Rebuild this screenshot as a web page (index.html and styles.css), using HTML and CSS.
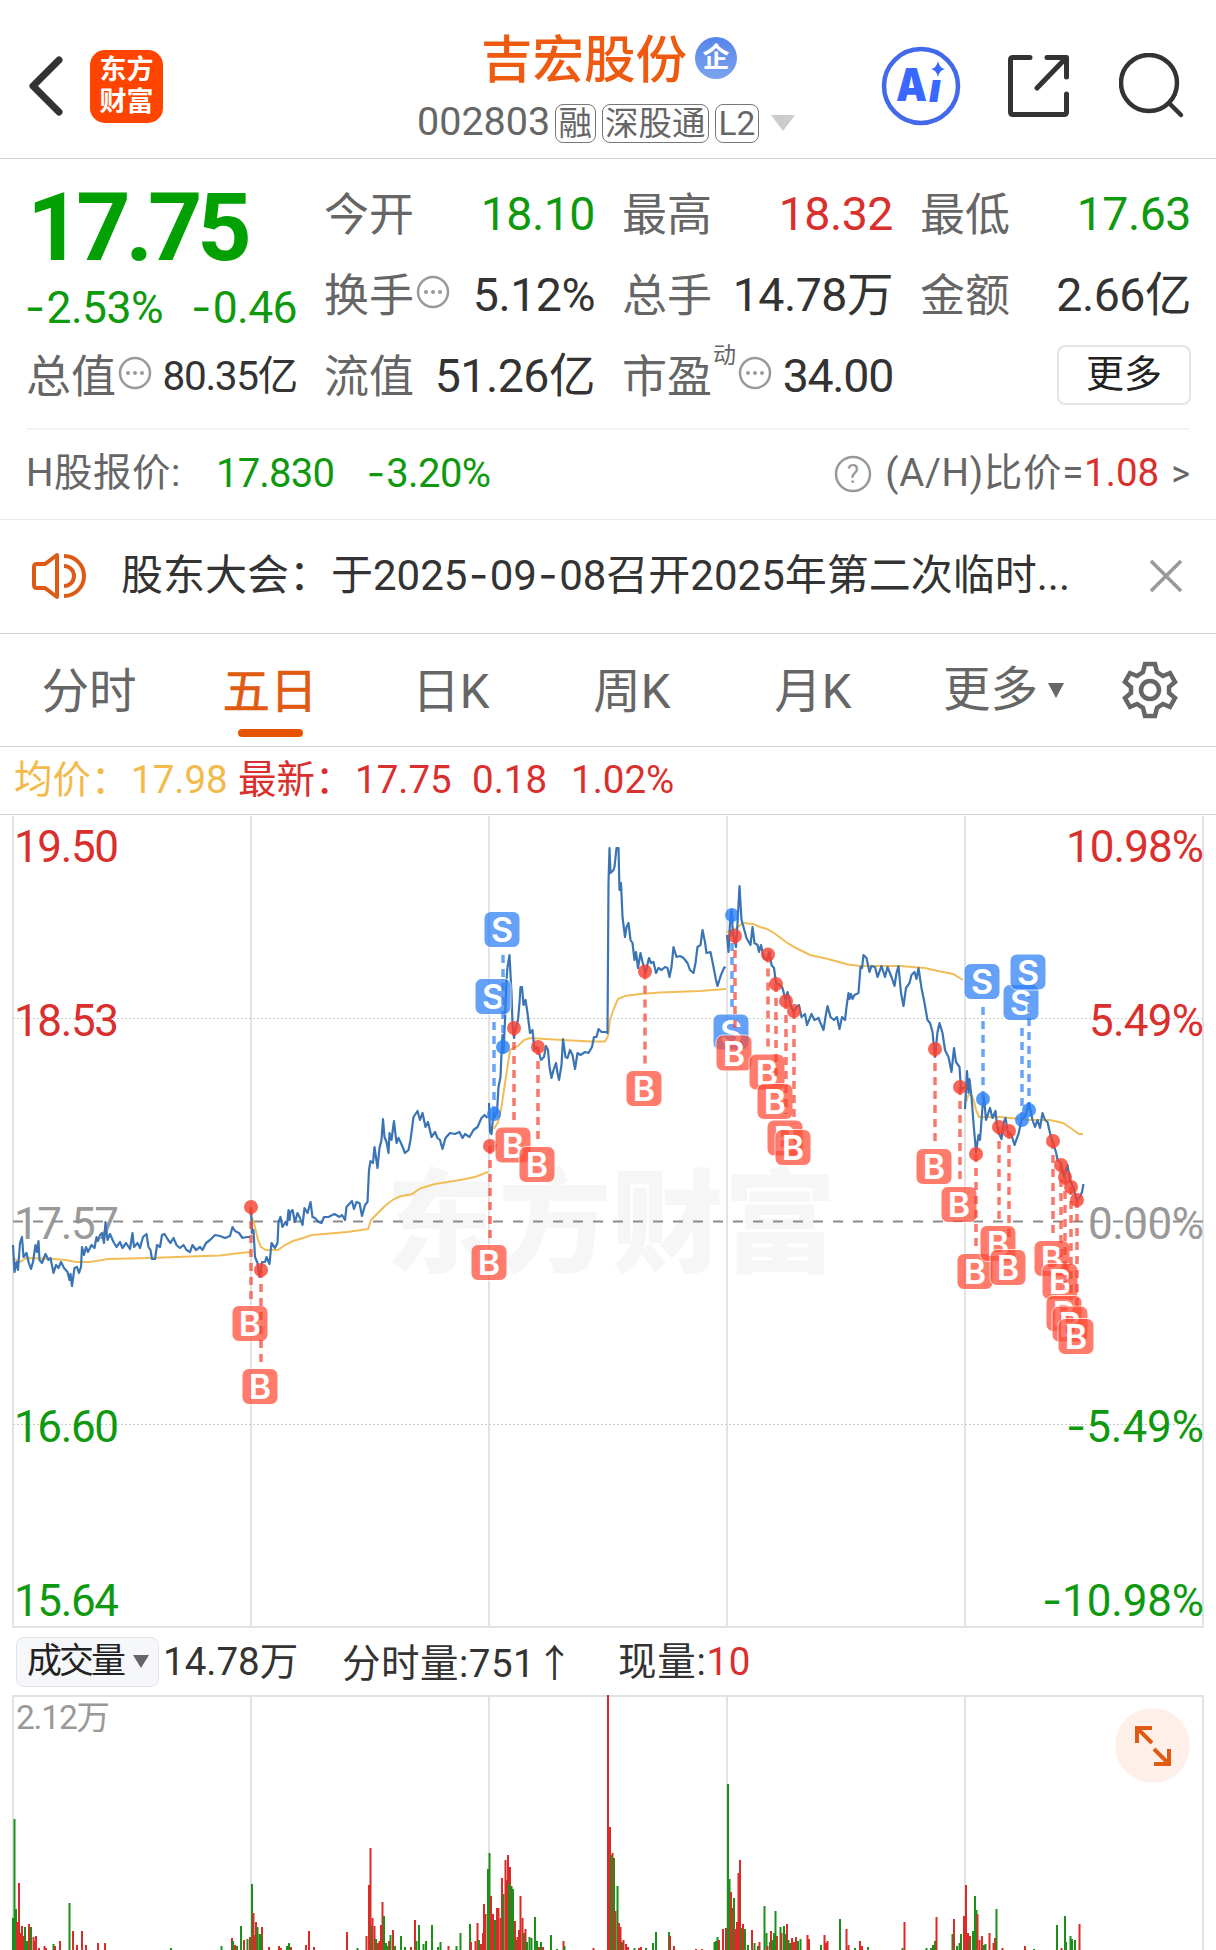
FILE: index.html
```html
<!DOCTYPE html>
<html lang="zh-CN">
<head>
    <meta charset="UTF-8">
    <title>吉宏股份 002803</title>
    <link rel="stylesheet" href="styles.css">
</head>
<body>
<header class="topbar">
    <div class="topbar-left">
        <svg class="back" width="40" height="64" viewBox="0 0 40 64"><path d="M34 6 8 32l26 26" fill="none" stroke="#333" stroke-width="7" stroke-linecap="round" stroke-linejoin="round"/></svg>
        <div class="logo"><span>东方</span><span>财富</span></div>
    </div>
    <div class="stock">
        <div class="stock-name">吉宏股份<span class="badge-qi">企</span></div>
        <div class="stock-code">
            <span class="code">002803</span>
            <span class="tag">融</span>
            <span class="tag">深股通</span>
            <span class="tag">L2</span>
            <svg class="code-arrow" width="24" height="16" viewBox="0 0 24 16"><path d="M0 0h24L12 16z" fill="#ccc"/></svg>
        </div>
    </div>
    <div class="topbar-right">
        <svg width="80" height="80" viewBox="0 0 80 80">
            <circle cx="40" cy="40" r="37" fill="none" stroke="#4169ea" stroke-width="4.5"/>
            <text class="ai-text" x="15" y="55" textLength="31" lengthAdjust="spacingAndGlyphs">A</text>
            <text class="ai-text ai-i" x="48" y="56">ı</text>
            <path d="M57 15q1.500 7 7 8-5.500 1-7 8-1.500-7-7-8 5.500-1 7-8z" fill="#3868ff"/>
        </svg>
        <svg width="64" height="64" viewBox="0 0 64 64" fill="none" stroke="#333" stroke-width="5" stroke-linecap="round" stroke-linejoin="round">
            <path d="M23 3.500H6Q3.500 3.500 3.500 6v52q0 2.500 2.500 2.500h51q2.500 0 2.500-2.500V40M40 3.500h19.500V23M59 4 30 34"/>
        </svg>
        <svg width="66" height="66" viewBox="0 0 66 66" fill="none" stroke="#333" stroke-width="4.500" stroke-linecap="round">
            <circle cx="30" cy="30" r="28"/><path d="M50 50 62 62"/>
        </svg>
    </div>
</header>

<section class="quote">
    <div class="quote-grid">
        <div class="col col-main">
            <div class="price green">17.75</div>
            <div class="change green"><span><i class="dash">-</i>2.53%</span><span><i class="dash">-</i>0.46</span></div>
            <div class="item item-small"><label>总值</label><svg class="dots" width="34" height="34" viewBox="0 0 34 34"><use href="#dots"/></svg><b>80.35亿</b></div>
        </div>
        <div class="col">
            <div class="item"><label>今开</label><b class="green">18.10</b></div>
            <div class="item"><label>换手</label><svg class="dots" width="34" height="34" viewBox="0 0 34 34"><g id="dots"><circle cx="17" cy="17" r="15" fill="none" stroke="#999" stroke-width="2.500"/><circle cx="10" cy="17" r="2" fill="#999"/><circle cx="17" cy="17" r="2" fill="#999"/><circle cx="24" cy="17" r="2" fill="#999"/></g></svg><b>5.12%</b></div>
            <div class="item"><label>流值</label><b>51.26亿</b></div>
        </div>
        <div class="col">
            <div class="item"><label>最高</label><b class="red">18.32</b></div>
            <div class="item"><label>总手</label><b>14.78万</b></div>
            <div class="item"><label>市盈</label><sup>动</sup><svg class="dots" width="34" height="34" viewBox="0 0 34 34"><use href="#dots"/></svg><b class="pe">34.00</b></div>
        </div>
        <div class="col">
            <div class="item"><label>最低</label><b class="green">17.63</b></div>
            <div class="item"><label>金额</label><b>2.66亿</b></div>
            <div class="item"><button type="button" class="more-btn">更多</button></div>
        </div>
    </div>
    <div class="h-share">
        <span class="h-label">H股报价:</span>
        <span class="h-price green">17.830</span>
        <span class="h-pct green"><i class="dash">-</i>3.20%</span>
        <div class="h-ratio">
            <svg width="38" height="38" viewBox="0 0 38 38"><circle cx="19" cy="19" r="17" fill="none" stroke="#999" stroke-width="2.500"/><text class="q-mark" x="19" y="28" text-anchor="middle">?</text></svg>
            <span class="h-ratio-text">(A/H)比价=</span><span class="red">1.08</span><span class="gt">&gt;</span>
        </div>
    </div>
</section>

<section class="notice">
    <svg width="56" height="48" viewBox="0 0 56 48" fill="none" stroke="#dd5a14" stroke-width="4" stroke-linejoin="round">
        <path d="M26 3v42L14 36H6q-3 0-3-3V15q0-3 3-3h8z"/>
        <path d="M33 4a20 20 0 0 1 0 40M33 14a10 10 0 0 1 0 20"/>
    </svg>
    <p class="notice-text">股东大会：于2025<i class="dash">-</i>09<i class="dash">-</i>08召开2025年第二次临时...</p>
    <svg class="close" width="34" height="34" viewBox="0 0 34 34"><path d="M2 2l30 30M32 2 2 32" stroke="#999" stroke-width="3.500"/></svg>
</section>

<nav class="tabs">
    <div class="tab">分时</div>
    <div class="tab active">五日</div>
    <div class="tab">日K</div>
    <div class="tab">周K</div>
    <div class="tab">月K</div>
    <div class="tab tab-more">更多<svg width="16" height="15" viewBox="0 0 16 15"><path d="M0 0h16L8 15z" fill="#666"/></svg></div>
    <svg class="gear" width="58" height="60" viewBox="-29 -30 58 60" fill="none" stroke="#666" stroke-width="4.500">
        <path d="M-5-26H5L7-18 13-14 20-17 25-8 19-3V3L25 8 20 17 13 14 7 18 5 26H-5L-7 18-13 14-20 17-25 8-19 3V-3L-25-8-20-17-13-14-7-18Z"/>
        <circle r="9"/>
    </svg>
</nav>

<div class="chart-info">
    <span class="avg n0">均价：</span><span class="avg n1">17.98</span><span class="red n2">最新：</span><span class="red n3">17.75</span><span class="red n4">0.18</span><span class="red">1.02%</span>
</div>

<svg id="price-chart" class="price-chart" width="1216" height="813" viewBox="0 815 1216 813"></svg>

<div class="volume-bar">
    <div class="volume-select"><span>成交量</span><svg width="16" height="13" viewBox="0 0 16 13"><path d="M0 0h16L8 13z" fill="#666"/></svg></div>
    <span class="v-total">14.78万</span>
    <span class="v-minute">分时量:751<i>↑</i></span>
    <span class="v-now">现量:<span class="red">10</span></span>
</div>

<div class="volume">
    <svg id="volume-chart" width="1216" height="255" viewBox="0 0 1216 255"></svg>
    <button type="button" class="expand">
        <svg width="40" height="44" viewBox="0 0 40 44" fill="none" stroke="#e05a12" stroke-width="4"><path d="M4 19V4h15M5 5l14 14M36 25v15H21M35 39 21 25"/></svg>
    </button>
</div>

<script src="chart.js"></script>
</body>
</html>
```

FILE: styles.css
```css
* {
    box-sizing: border-box;
}

body {
    width: 1216px;
    height: 1950px;
    margin: 0;
    overflow: hidden;
    background-color: #fff;
    color: #333;
    font-family: Roboto, "Noto Sans CJK SC", sans-serif;
    line-height: 1;
}

svg {
    display: block;
    flex: none;
}

.green {
    color: #0f990f;
}

.red {
    color: #d9302e;
}

/* Wide minus / date dash */
.dash {
    display: inline-block;
    width: 0.53em;
    font-family: Inter, sans-serif;
    font-style: normal;
    text-align: center;
}

/* Top bar */
.topbar {
    display: flex;
    height: 159px;
    border-bottom: 1px solid #d2d2d2;
}

.topbar-left {
    display: flex;
    align-items: center;
    gap: 25px;
    width: 408px;
    padding: 14px 0 0 25px;
}

.logo {
    display: flex;
    flex-direction: column;
    align-items: center;
    gap: 5px;
    width: 73px;
    height: 73px;
    padding-top: 7px;
    border-radius: 15px;
    background-color: #ff4400;
    color: #fff;
    font-size: 27px;
    font-weight: 700;
}

.stock {
    width: 420px;
}

.stock-name {
    display: flex;
    align-items: center;
    height: 98px;
    padding: 24px 0 0 73px;
    color: #ee5a10;
    font-size: 51.500px;
    font-weight: 500;
}

.badge-qi {
    width: 42px;
    height: 42px;
    margin: -6px 0 0 8px;
    border-radius: 50%;
    background: linear-gradient(#5585ea, #7ba3ee);
    color: #fff;
    font-size: 27px;
    font-weight: 700;
    line-height: 43px;
    text-align: center;
}

.stock-code {
    display: flex;
    align-items: center;
    gap: 6px;
    height: 50px;
    padding-left: 9px;
    color: #666;
}

.code {
    width: 132px;
    margin-top: -2px;
    font-size: 39.500px;
}

.tag {
    height: 39px;
    padding: 0 2.500px;
    border: 1.500px solid #777;
    border-radius: 8px;
    font-size: 33.500px;
    line-height: 37px;
}

.code-arrow {
    margin-left: 6px;
}

.topbar-right {
    display: flex;
    align-items: center;
    gap: 46px;
    padding: 14px 0 0 53px;
}

.topbar-right svg:last-child {
    margin-left: 2px;
}

.ai-text {
    fill: #3868ff;
    font-family: Inter, sans-serif;
    font-size: 46px;
    font-weight: 900;
}

.ai-i {
    font-size: 40px;
    font-style: italic;
}

/* Quote panel */
.quote {
    height: 361px;
    padding: 0 26px;
    border-bottom: 1px solid #eaeaea;
}

.quote-grid {
    display: grid;
    grid-template-columns: repeat(4, 271px);
    column-gap: 27px;
    height: 271px;
    padding-top: 15px;
    border-bottom: 2px solid #f4f4f4;
}

.item {
    display: flex;
    align-items: center;
    height: 81px;
}

.item label {
    padding-top: 2px;
    color: #666;
    font-size: 45px;
}

.item b {
    margin-left: auto;
    font-size: 46.500px;
    font-weight: 400;
    letter-spacing: -0.500px;
    white-space: nowrap;
}

.item-small b {
    font-size: 40.500px;
    letter-spacing: -1.300px;
}

.item .pe {
    letter-spacing: -1.300px;
}

.dots {
    margin: -8px 0 0 2px;
}

.item sup {
    margin: -42px 0 0 1px;
    color: #666;
    font-size: 23px;
    line-height: 1;
}

.price {
    height: 106px;
    padding-left: 1px;
    font-size: 95px;
    font-weight: 700;
    line-height: 107px;
    letter-spacing: -5.200px;
    color: #02a002;
}

.change {
    display: flex;
    justify-content: space-between;
    align-items: center;
    height: 56px;
    margin-left: -3px;
    font-size: 44.500px;
    letter-spacing: -0.600px;
}

.more-btn {
    width: 134px;
    height: 60px;
    margin: -4px 0 0 auto;
    padding: 0 0 2px;
    border: 2px solid #e4e4e4;
    border-radius: 8px;
    background-color: #fff;
    color: #222;
    font: 38px/1 Roboto, "Noto Sans CJK SC", sans-serif;
}

.h-share {
    display: flex;
    align-items: center;
    height: 85px;
    padding-top: 2px;
    color: #666;
    font-size: 38.500px;
}

.h-label {
    width: 190px;
    letter-spacing: 0.500px;
}

.h-price {
    width: 149px;
    font-size: 40px;
    letter-spacing: -0.800px;
}

.h-pct {
    font-size: 40px;
    letter-spacing: -0.600px;
}

.h-ratio {
    display: flex;
    align-items: center;
    margin-left: auto;
}

.h-ratio-text {
    margin-left: 13px;
    letter-spacing: 0.700px;
}

.gt {
    margin-left: 12px;
    font-size: 36px;
}

.q-mark {
    fill: #999;
    font-size: 26px;
}

/* Notice */
.notice {
    display: flex;
    align-items: center;
    height: 114px;
    padding: 0 33px 2px 31px;
    border-bottom: 1px solid #d2d2d2;
}

.notice-text {
    margin: 0 auto 0 34px;
    font-size: 42px;
    white-space: nowrap;
}

/* Tabs */
.tabs {
    display: flex;
    align-items: center;
    height: 113px;
    border-bottom: 1px solid #d2d2d2;
    color: #666;
    font-size: 47.500px;
}

.tab {
    position: relative;
    width: 181px;
    height: 112px;
    padding-right: 3px;
    text-align: center;
    line-height: 117px;
}

.tab.active {
    color: #e05a12;
    -webkit-text-stroke: 0.600px #e05a12;
}

.tab.active::after {
    content: '';
    position: absolute;
    left: 57px;
    bottom: 9px;
    width: 65px;
    height: 8px;
    border-radius: 4px;
    background-color: #e65400;
}

.tab-more {
    display: flex;
    align-items: center;
    justify-content: center;
    gap: 10px;
    width: 200px;
}

.gear {
    margin-left: 16px;
}

.chart-info {
    display: flex;
    align-items: center;
    height: 68px;
    padding-left: 14px;
    border-bottom: 1px solid #d2d2d2;
    font-size: 38.500px;
    white-space: nowrap;
}

.avg {
    color: #f2b94b;
}

.n0 {
    width: 117px;
}

.n1 {
    width: 107px;
}

.n2 {
    width: 117px;
}

.n3 {
    width: 117px;
}

.n4 {
    width: 99px;
}

/* Price chart */
.grid-line {
    stroke: #e2e2e2;
    stroke-width: 2;
}

.grid-dot {
    stroke: #ccc;
    stroke-width: 1;
    stroke-dasharray: 2 2;
}

.base-line {
    stroke: #8c8c8c;
    stroke-width: 2;
    stroke-dasharray: 10 10;
}

.watermark {
    fill: #f6f6f6;
    font-size: 112px;
    font-weight: 900;
}

.axis {
    font-size: 44px;
}

.axis-dash {
    font-family: Inter, sans-serif;
}

.axis-up {
    fill: #d9302e;
}

.axis-mid {
    fill: #999;
}

.axis-down {
    fill: #0f990f;
}

.line-price {
    fill: none;
    stroke: #3b74b5;
    stroke-width: 2.200;
    stroke-linejoin: round;
}

.line-avg {
    fill: none;
    stroke: #f0bd58;
    stroke-width: 2;
}

.mark-b {
    fill: #f6402f;
    stroke: #f6402f;
}

.mark-s {
    fill: #2a7ff5;
    stroke: #2a7ff5;
}

.mark-line {
    stroke-width: 3.500;
    stroke-dasharray: 8 6;
    opacity: 0.7;
}

.mark-dot {
    stroke: none;
    opacity: 0.8;
}

.mark-box {
    stroke: #fff;
    stroke-width: 1;
    opacity: 0.72;
}

.mark-b .mark-box {
    fill: #ff4b36;
}

.mark-text {
    fill: #fff;
    stroke: none;
    font-family: Inter, sans-serif;
    font-size: 34px;
    font-weight: 600;
    text-anchor: middle;
}

/* Volume */
.volume-bar {
    display: flex;
    align-items: center;
    height: 67px;
    padding-left: 16px;
    font-size: 38.500px;
    white-space: nowrap;
}

.volume-select {
    display: flex;
    align-items: center;
    gap: 7px;
    width: 143px;
    height: 50px;
    padding: 0 0 0 10px;
    border: 1px solid #e2e4e8;
    border-radius: 8px;
    background-color: #f6f7fa;
    color: #222;
    font-size: 35px;
    letter-spacing: -3px;
}

.volume-select span {
    width: 99px;
}

.v-total,
.v-minute,
.v-now {
    padding-top: 2px;
}

.v-total {
    width: 184px;
    margin-left: 4px;
}

.v-minute {
    width: 276px;
    margin-left: -5px;
    letter-spacing: 0.500px;
}

.v-minute i {
    font-family: "Noto Sans CJK SC", sans-serif;
    font-style: normal;
}

.v-now {
    letter-spacing: 0.700px;
}

.volume {
    position: relative;
    height: 255px;
}

.volume-max {
    fill: #999;
    font-size: 33.500px;
}

.expand {
    position: absolute;
    top: 13px;
    right: 26px;
    display: flex;
    align-items: center;
    justify-content: center;
    width: 75px;
    height: 75px;
    padding: 0;
    border: none;
    border-radius: 50%;
    background-color: #fef0e9;
}
```

FILE: chart.js
```js
const COLUMNS = [13, 251, 489, 727, 965, 1203];

// One polyline per trading day
const priceDays = [
    "13,1245 14.5,1272 16.5,1262 18,1270 20,1243 22,1237 23.5,1257 26.5,1253 28.5,1262 31,1269 33,1262 35.5,1245 37,1252 38.5,1241 39.5,1260 42,1263 45.5,1254 48.5,1260 50.5,1258 53.5,1273 56,1265 58.5,1268 61,1262 64,1268 67.5,1272 69.5,1280 70.5,1274 72,1286 74.5,1268 77,1267 79,1273 81,1267 82,1247 84,1255 86,1247 88,1252 91.5,1245 94.5,1248 96.5,1237 98,1241 100,1235 102,1233 104,1243 105.5,1222 107.5,1240 110,1234 113.5,1242 116.5,1247 120,1242 122.5,1248 126,1243 130,1249 132.5,1233 134,1247 137.5,1243 140,1248 143,1237 146.5,1234 148.5,1247 150.5,1250 152,1259 155,1259 157,1245 160,1247 162,1235 164.5,1234 167.5,1239 170.5,1243 173.5,1238 176.5,1245 180,1248 183.5,1245 186.5,1250 190,1252 192.5,1245 196,1250 200,1247 202.5,1250 206,1243 210,1240 215,1235 220,1236 225,1238 230,1236 232.5,1227 235,1231 239,1233 242.5,1238 247,1237 250,1237",
    "251,1208 252,1233 253.5,1230 255,1257 257.5,1263 259.5,1277 262,1262 265,1262 266.5,1257 269.5,1264 271.5,1243 275,1248 277.5,1243 278.5,1222 280.5,1217 282.5,1227 285.5,1222 287,1225 288.5,1210 289.5,1220 290.5,1212 292.5,1210 295,1222 297.5,1213 300,1218 302.5,1225 304.5,1208 307.5,1213 310.5,1202 312.5,1217 315,1218 318.5,1222 321.5,1223 324,1217 328.5,1217 334.5,1214 339.5,1217 342,1215 345,1220 346.5,1207 350,1203 352,1201 354,1209 356.5,1202 359.5,1203 362,1216 365,1205 367.5,1202 369,1170 370.5,1161 373,1163 374.5,1147 377.5,1168 379.5,1148 381.5,1140 383,1119 384.5,1137 386.5,1142 388.5,1153 389.5,1133 391.5,1140 394,1121 396.5,1143 398.5,1138 400.5,1142 403,1148 405,1153 408.5,1150 410.5,1140 413.5,1117 417.5,1111 420,1120 422.5,1113 425.5,1127 428,1122 431.5,1137 435,1132 437.5,1138 440,1140 442.5,1149 445.5,1138 450,1133 455,1134 459.5,1132 462.5,1138 465,1134 469.5,1137 473.5,1130 477.5,1127 481.5,1118 484.5,1115 487.5,1118",
    "489,1103 490,1132 491.5,1134 493.5,1113 495,1117 497,1112 498.5,1087 500.5,1077 501.5,1053 502.5,1035 503.5,1053 505,1020 506.5,980 507.5,967 509.5,955 511.5,993 512.5,1023 514,1038 516,1027 518,1020 519.5,1003 520.5,987 522,987 523.5,1005 525.5,1000 527.5,1013 530,1033 532.5,1030 534.5,1050 536.5,1047 539,1053 541,1060 544,1057 546,1046 548,1050 549.5,1067 551.5,1078 553.5,1070 556,1063 557.5,1073 559,1080 561.5,1065 563,1039 565.5,1057 567.5,1058 570,1050 572.5,1055 575,1069 577.5,1053 580.5,1055 585,1052 588.5,1053 592,1047 594,1037 596.5,1037 598.5,1029 601.5,1032 605.5,1032 607.5,1033 608.5,883 609.5,848 610.5,873 613.5,870 614.5,867 616.5,848 618.5,848 619.5,890 621,883 622.5,917 625,937 626.5,927 628.5,923 630.5,940 632.5,943 634.5,960 636,952 638,968 640.5,953 642.5,962 645.5,973 649,958 651,963 653.5,962 656,973 658.5,968 661.5,970 665,967 667.5,968 669.5,977 671.5,967 673.5,947 676.5,957 680,956 683.5,958 687.5,963 690,970 693.5,973 695.5,963 697.5,947 700.5,945 702.5,930 705,942 706.5,953 710.5,952 713.5,967 716,980 717.5,986 721,975 724,968 725.5,967",
    "727,935 728.5,952 730,923 731.5,910 732.5,927 734.5,940 736,947 737.5,923 739.5,886 741.5,920 743.5,927 746.5,938 750.5,945 752.5,927 754.5,943 757.5,945 759,952 761,945 764,958 766.5,960 769.5,952 771.5,965 774,968 776,983 780,985 782.5,988 785.5,1000 787.5,992 790,1003 793.5,1012 796.5,1007 799,1005 801.5,1017 805,1014 807,1025 811.5,1014 814.5,1020 818.5,1018 820.5,1023 823.5,1030 825.5,1017 827.5,1006 830.5,1017 834,1020 837,1017 839.5,1029 842,1017 845,1020 846.5,1007 848.5,993 849.5,999 851,994 852.5,999 854.5,995 858.5,993 860.5,967 862,968 863.5,955 866.5,958 869.5,972 871.5,966 875,967 877.5,977 881.5,966 885,977 887.5,967 891.5,977 894.5,986 896.5,973 898.5,966 901,993 903.5,1006 906,988 909.5,983 911.5,975 914.5,972 916.5,979 918.5,968 921.5,988 924.5,1003 927.5,1020 930,1023 932.5,1032 935,1057 937.5,1032 939.5,1023 942.5,1033 945,1050 948.5,1057 951.5,1072 954,1048 956,1062 959.5,1067 961,1090 964.5,1087",
    "965,1109 967,1071 968.5,1093 969.5,1079 971.5,1097 973.5,1123 976,1152 978.5,1135 980,1140 982.5,1107 984,1097 986,1120 990,1108 992.5,1118 995.5,1111 997.5,1130 1001.5,1139 1003.5,1123 1005.5,1118 1008,1133 1011.5,1135 1014.5,1145 1018.5,1134 1021.5,1120 1025,1117 1029,1103 1032.5,1120 1035,1127 1037.5,1120 1040,1128 1042.5,1113 1045,1120 1047.5,1122 1050,1133 1052.5,1142 1056,1152 1057.5,1160 1061,1163 1064,1177 1067.5,1165 1070,1180 1073.5,1188 1076.5,1200 1080,1197 1082,1192 1083.5,1184"
];

const avgDays = [
    "13,1258 20,1262 26,1258 53,1259 66,1260 76,1262 90,1262 108,1259 150,1258 190,1256.5 220,1255.5 240,1253 250,1252",
    "252,1217 254,1223 258,1240 261,1247 266,1250 278,1250 285,1245 293,1241 303,1238 312,1235 330,1233.5 347,1232 368,1229 371,1220 375,1216 382,1209 386,1205 394,1199 400,1196.5 412,1194 420,1188.5 435,1184 460,1180 475,1177 488,1172",
    "494,1129 498,1122 501,1110 504,1090 507,1070 510,1050 513,1048 518,1046 524,1040 530,1038 545,1039 563,1040 590,1041.5 605,1041.5 608,1036 610,1020 614,1008 618,999 625,996 640,994 660,992.5 700,991 726,989",
    "727,932 735,929 743,923 753,924 760,927 767,929 774,933 786,942 796,948 810,955 828,959 848,964.5 860,966 900,966 925,968 938,971 953,974 963,980",
    "966,1102 968,1096 971,1094 974,1101 976,1110 979,1117 1000,1117 1030,1120 1050,1120 1063,1123 1072,1129 1079,1134 1083,1134"
];

// type, x, dot y, badge y
const marks = [
    ["B", 251, 1207, 1323.5], ["B", 261, 1270, 1386.5],
    ["B", 490, 1146, 1262.5], ["S", 494, 1114, 996.5], ["S", 503, 1047, 929.5],
    ["B", 514, 1028, 1145], ["B", 538, 1047, 1164.5], ["B", 645, 971.5, 1088.5],
    ["S", 732, 915, 1032], ["B", 735, 936, 1053],
    ["B", 768, 954.5, 1072], ["B", 776, 984, 1101.5], ["B", 786, 1001, 1138], ["B", 794, 1011, 1147.5],
    ["B", 935, 1049, 1166.5], ["B", 960, 1087, 1204.5], ["B", 976, 1154, 1271.5],
    ["S", 983, 1099, 981.5], ["B", 999, 1127, 1243.5], ["B", 1009, 1131, 1267.5],
    ["S", 1022, 1120, 1002.5], ["S", 1029, 1110, 972],
    ["B", 1053, 1141, 1258.5], ["B", 1061, 1165, 1281.5], ["B", 1065, 1177, 1313.5],
    ["B", 1071, 1187, 1324], ["B", 1077, 1200, 1336.5]
];

// text, baseline, class, width
const axisLeft = [["19.50", 862, "up"], ["18.53", 1035.5, "up"], ["17.57", 1238.5, "mid"], ["16.60", 1441.5, "down"], ["15.64", 1616, "down"]];
const axisRight = [["10.98%", 862, "up", 138], ["5.49%", 1035.5, "up", 115], ["0.00%", 1238.5, "mid", 116], ["-5.49%", 1441.5, "down", 138], ["-10.98%", 1616, "down", 162]];

// x:height, g = falling minute, r = rising minute
const volume = "g13:32 g14.5:131 g16:41 r17:28 r19:67 r20.5:17 r22:24 r23.5:14 g25:23 g27:9 r29:26 r30:12 g31:23 r33.5:13 r35:9 r36:14 r39:2 r44.5:4 r46:2 g53.5:6 r55:4 r60:9 g69.5:47 r73:19 r77:5 r82:19 r86:5 r98:7 r105:7 g171:2 g221.5:4 r232:12 g233:9 r235:5 g237:4 g241:24 r244:10 g247.5:11 r250:13 g252:66 r253.5:37 r255:15 r256:28 g257.5:23 g259.5:16 r262:23 g261:16 r269:3 r279:4 r281:2 g287:4 g289:7 r291:3 r306:5 r309:19 r314:3 r347:18 g357.5:2 r366.5:14 r369:65 r370.5:102 g371.5:24 r372.5:32 r374.5:24 g376:11 r378:7 r379.5:9 r381:25 r382.5:48 g384:34 g386:7 g387.5:4 r389:9 g390.5:15 r393:20 g395:4 g401:14 g405:3 r411:3 r415:30 g416.5:9 g419:25 g423.5:6 g426:9 g432:25 g438:3 g440.5:8 r448.5:4 g456.5:4 g460.5:17 g470:26 r471:8 r475.5:9 r477.5:27 g479:10 r481:6 r483:17 r484:46 r485.5:36 g488:81 g489.5:97 r491:54 r493:36 g495:30 r497:42 r498.5:42 r500.5:32 r502:72 g503.5:56 r505.5:90 r506.5:70 r508:95 r510:83 g509:67 g511.5:64 g513:61 r515:29 g516.5:10 r517.5:13 r519:20 r520.5:54 r522.5:32 g524:17 r525.5:21 g527:8 g529.5:13 g531.5:12 g535:33 g537:9 r539:3 g541:8 r543:3 g551:15 g557:1 r563.5:9 g564.5:4 r593.5:2 r608:255 r610:123 g611:95 r612.5:97 g614:92 r615.5:39 g617.5:64 r619:27 r620.5:23 g622:8 r623.5:10 r626:6 r628:3 g634.5:2 r639:2 r641:3 g646:2 g653:7 g656:18 g669:18 r670:14 r674:4 r696:1 r702:1 g714.5:8 g716:9 g717.5:13 r719:10 r723:21 r726:22 g728:166 g729.5:71 r731:58 r732.5:42 g734:52 r735.5:21 r737:28 r738.5:77 r740:90 g741.5:22 r743:26 g745:21 g748:5 r752:20 g754.5:7 g758:4 r759.5:8 g764.5:44 g766.5:17 r767.5:4 g770:8 r771:19 g772.5:10 g774:17 g775.5:39 r777:14 g780.5:23 r781.5:17 g784:24 g785.5:16 r787:26 g788.5:10 g790:7 r792:12 r794:8 r796:13 g798:9 g800.5:11 r807.5:15 r809:11 g821:5 r824.5:15 r826:7 r827.5:9 g840:31 r846.5:21 r848.5:5 g855:2 r860:9 r862:4 g868:3 g902.5:2 r904.5:28 g926.5:2 g931:2 g933:5 g935:9 r936.5:33 g952.5:16 r954:31 g957:4 g959.5:7 g961:16 r964:34 r966:65 r968:17 g969:10 r970:14 g973:19 g975:54 g976.5:40 r977.5:36 r979.5:10 r982:14 g984:5 g985.5:6 r989.5:17 r993.5:7 r995:12 g996.5:41 r1002.5:2 r1025:4 g1034:1 g1057:25 r1061.5:2 g1065:34 g1066:8 g1070.5:14 g1072:11 g1075:10 r1079.5:26";

function verticals(y1, y2) {
    return COLUMNS.map(x => `<line class="grid-line" x1="${x}" y1="${y1}" x2="${x}" y2="${y2}"/>`).join("");
}

function drawPrice() {
    let out = `<text class="watermark" x="386" y="1264" textLength="450">东方财富</text>`;
    out += verticals(816, 1627);
    out += `<line class="grid-dot" x1="13" y1="1018.5" x2="1203" y2="1018.5"/>`;
    out += `<line class="grid-dot" x1="13" y1="1424.5" x2="1203" y2="1424.5"/>`;
    out += `<line class="grid-line" x1="12" y1="1627" x2="1204" y2="1627"/>`;

    axisLeft.forEach(([text, y, cls]) => {
        out += `<text class="axis axis-${cls}" x="14" y="${y}" textLength="105">${text}</text>`;
    });
    axisRight.forEach(([text, y, cls, width]) => {
        const label = text.replace("-", `<tspan class="axis-dash">-</tspan>`);
        out += `<text class="axis axis-${cls}" x="${1204 - width}" y="${y}" textLength="${width}">${label}</text>`;
    });
    out += `<line class="base-line" x1="13" y1="1221.5" x2="1203" y2="1221.5"/>`;

    avgDays.forEach(points => {
        out += `<polyline class="line-avg" points="${points}"/>`;
    });
    priceDays.forEach(points => {
        out += `<polyline class="line-price" points="${points}"/>`;
    });

    marks.forEach(([type, x, y, by]) => {
        const dir = by > y ? 1 : -1;
        out += `<g class="mark-${type.toLowerCase()}">
            <line class="mark-line" x1="${x}" y1="${y}" x2="${x}" y2="${by - dir * 24}"/>
            <circle class="mark-dot" cx="${x}" cy="${y}" r="7"/>
            <rect class="mark-box" x="${x - 19}" y="${by - 18}" width="36" height="36" rx="7"/>
            <text class="mark-text" x="${x - 1}" y="${by + 12.5}">${type}</text>
        </g>`;
    });
    document.getElementById("price-chart").innerHTML = out;
}

function drawVolume() {
    let out = verticals(0, 255);
    out += `<line class="grid-line" x1="12" y1="1" x2="1204" y2="1"/>`;
    out += `<text class="volume-max" x="16" y="34" textLength="94">2.12万</text>`;
    volume.split(" ").forEach(bar => {
        const [x, h] = bar.slice(1).split(":").map(Number);
        const color = bar[0] === "g" ? "#1a901a" : "#dc2a28";
        out += `<rect x="${x - 1}" y="${255 - h}" width="2" height="${h}" fill="${color}"/>`;
    });
    document.getElementById("volume-chart").innerHTML = out;
}

drawPrice();
drawVolume();
```
